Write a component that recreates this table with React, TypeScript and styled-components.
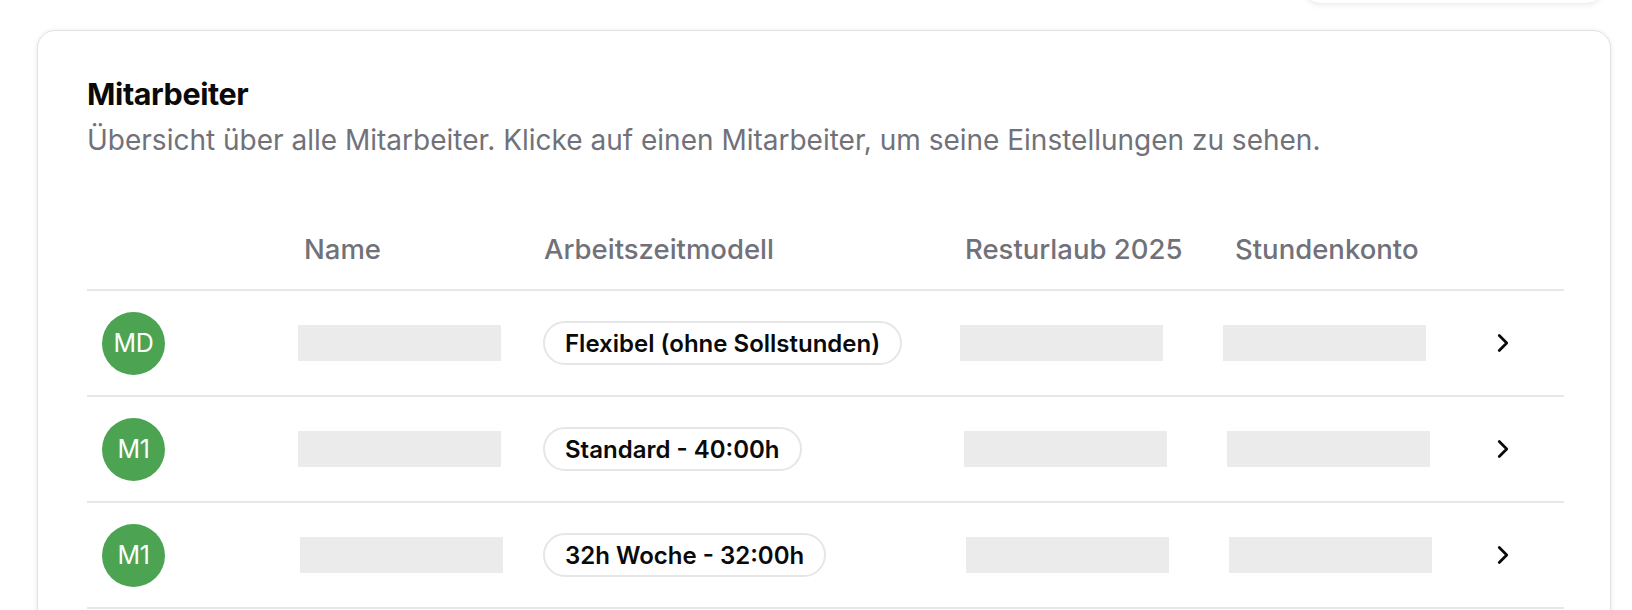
import React from "react";
import styled, { createGlobalStyle } from "styled-components";
import { ChevronRight } from "lucide-react";

const GlobalStyle = createGlobalStyle`
  html, body { margin: 0; padding: 0; background: #ffffff; }
  body { font-family: Inter, "Noto Sans", sans-serif; color: #0a0a0a; }
  * { box-sizing: border-box; }
`;

const Page = styled.div`
  position: relative;
  width: 1632px;
  height: 610px;
  overflow: hidden;
  padding: 30px 21px 0 37px;
`;

const Popover = styled.div`
  position: absolute;
  top: -60px;
  left: 1304px;
  width: 299px;
  height: 63px;
  background: #ffffff;
  border-radius: 16px;
  box-shadow: 0 2px 6px rgba(0, 0, 0, 0.08), 0 0 1px rgba(0, 0, 0, 0.08);
`;

const Card = styled.section`
  background: #ffffff;
  border: 1px solid #e2e2e2;
  border-radius: 18px;
  box-shadow: 0 1px 5px rgba(0, 0, 0, 0.1);
  padding: 45px 46px 0 49px;
  min-height: 620px;
`;

const Title = styled.h2`
  margin: 0;
  font-size: 30.5px;
  line-height: 36px;
  font-weight: 700;
  letter-spacing: -0.4px;
  color: #0a0a0a;
`;

const Description = styled.p`
  margin: 13px 0 0;
  font-size: 28px;
  line-height: 30px;
  font-weight: 400;
  color: #71717a;
`;

const Table = styled.div`
  margin-top: 54px;
  display: grid;
  grid-template-columns: 201px 240px 421px 270px 255px 1fr;
`;

const Row = styled.div<{ $header?: boolean }>`
  display: contents;
  & > * {
    height: ${(p) => (p.$header ? "82px" : "106px")};
    border-bottom: 2px solid #e7e7e9;
  }
`;

const Cell = styled.div`
  display: flex;
  align-items: center;
  padding-left: 15px;
`;

const HeadCell = styled(Cell)`
  padding-left: 16px;
  font-size: 27.5px;
  font-weight: 500;
  color: #71717a;
`;

const Avatar = styled.div`
  width: 63px;
  height: 63px;
  border-radius: 50%;
  background: #4ca453;
  color: #ffffff;
  display: flex;
  align-items: center;
  justify-content: center;
  font-size: 25px;
  font-weight: 400;
  letter-spacing: -0.3px;
`;

const Redacted = styled.div<{ $shift?: number }>`
  width: 203px;
  height: 36px;
  background: #ebebeb;
  margin-left: ${(p) => p.$shift ?? 0}px;
`;

const Badge = styled.span`
  display: inline-flex;
  align-items: center;
  height: 44px;
  padding: 0 20px;
  border: 2px solid #e6e6e8;
  border-radius: 999px;
  font-size: 24px;
  font-weight: 600;
  color: #0a0a0a;
  white-space: nowrap;
`;

const ChevronCell = styled(Cell)`
  padding-left: 14px;
  color: #0a0a0a;
`;

type Employee = {
  initials: string;
  model: string;
  shifts: [number, number, number];
};

const employees: Employee[] = [
  { initials: "MD", model: "Flexibel (ohne Sollstunden)", shifts: [-5, -4, -11] },
  { initials: "M1", model: "Standard - 40:00h", shifts: [-5, 0, -7] },
  { initials: "M1", model: "32h Woche - 32:00h", shifts: [-3, 2, -5] },
];

export default function App() {
  return (
    <>
      <GlobalStyle />
      <Page>
        <Popover />
        <Card>
          <Title>Mitarbeiter</Title>
          <Description>
            Übersicht über alle Mitarbeiter. Klicke auf einen Mitarbeiter, um seine Einstellungen zu sehen.
          </Description>
          <Table>
            <Row $header>
              <HeadCell />
              <HeadCell>Name</HeadCell>
              <HeadCell>Arbeitszeitmodell</HeadCell>
              <HeadCell>Resturlaub 2025</HeadCell>
              <HeadCell>Stundenkonto</HeadCell>
              <HeadCell />
            </Row>
            {employees.map((e, i) => (
              <Row key={i}>
                <Cell>
                  <Avatar>{e.initials}</Avatar>
                </Cell>
                <Cell>
                  <Redacted $shift={e.shifts[0]} />
                </Cell>
                <Cell>
                  <Badge>{e.model}</Badge>
                </Cell>
                <Cell>
                  <Redacted $shift={e.shifts[1]} />
                </Cell>
                <Cell>
                  <Redacted $shift={e.shifts[2]} />
                </Cell>
                <ChevronCell>
                  <ChevronRight size={30} strokeWidth={2.2} />
                </ChevronCell>
              </Row>
            ))}
          </Table>
        </Card>
      </Page>
    </>
  );
}
